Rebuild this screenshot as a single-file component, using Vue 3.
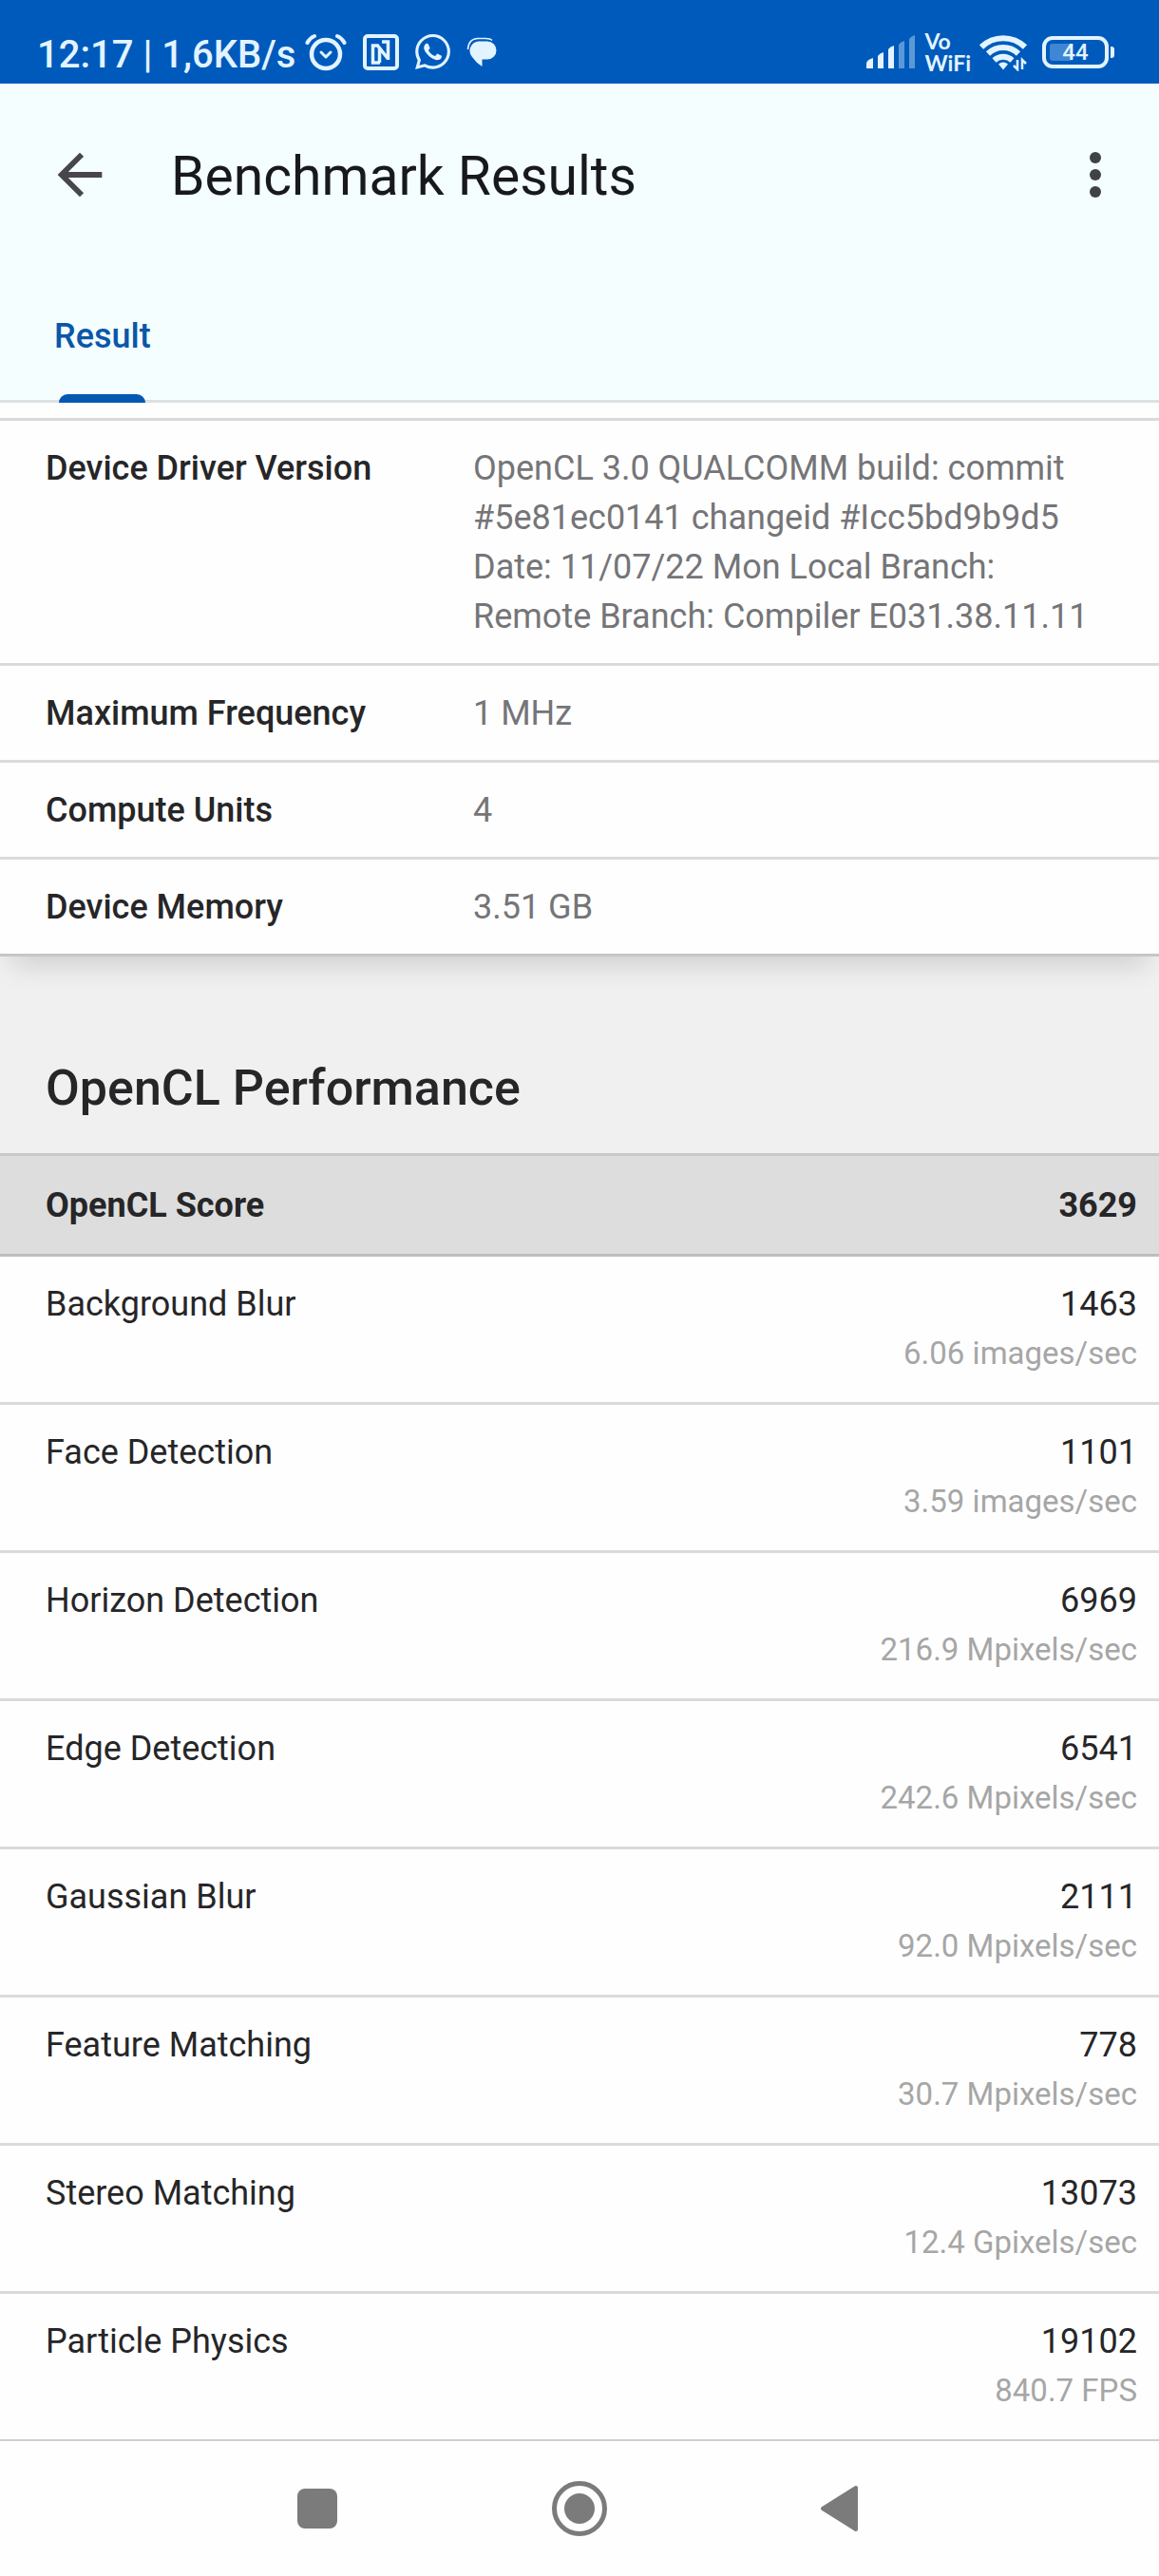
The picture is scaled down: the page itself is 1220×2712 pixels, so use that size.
<script setup>
const device = [
  { label: 'Device Driver Version', value: 'OpenCL 3.0 QUALCOMM build: commit #5e81ec0141 changeid #Icc5bd9b9d5 Date: 11/07/22 Mon Local Branch: Remote Branch: Compiler E031.38.11.11' },
  { label: 'Maximum Frequency', value: '1 MHz' },
  { label: 'Compute Units', value: '4' },
  { label: 'Device Memory', value: '3.51 GB' },
]

const results = [
  { name: 'Background Blur', score: 1463, rate: '6.06 images/sec' },
  { name: 'Face Detection', score: 1101, rate: '3.59 images/sec' },
  { name: 'Horizon Detection', score: 6969, rate: '216.9 Mpixels/sec' },
  { name: 'Edge Detection', score: 6541, rate: '242.6 Mpixels/sec' },
  { name: 'Gaussian Blur', score: 2111, rate: '92.0 Mpixels/sec' },
  { name: 'Feature Matching', score: 778, rate: '30.7 Mpixels/sec' },
  { name: 'Stereo Matching', score: 13073, rate: '12.4 Gpixels/sec' },
  { name: 'Particle Physics', score: 19102, rate: '840.7 FPS' },
]
</script>

<template>
  <div class="screen">
    <div class="status">
      <span class="clock">12:17 | 1,6KB/s</span>
      <div class="notices">
        <svg width="44" height="40" viewBox="0 0 44 40" fill="none" stroke="currentColor" stroke-linecap="round">
          <circle cx="22" cy="22" r="15" stroke-width="4.5" />
          <path d="M17 20l5 5 5-5" stroke-width="3" stroke-linejoin="round" />
          <path d="M2.500 10Q5 5 10 3M41.500 10Q39 5 34 3" stroke-width="4" />
        </svg>
        <svg width="38" height="38" viewBox="0 0 38 38" fill="none" stroke="currentColor">
          <rect x="2" y="2" width="34" height="34" rx="3" stroke-width="4" />
          <path d="M18 30h-7.500V12h5l11 14M20 8h6.500v19M17.500 14v16" stroke-width="3.500" />
        </svg>
        <svg width="37" height="37" viewBox="0 0 24 24" fill="currentColor">
          <path d="M17.472 14.382c-.297-.149-1.758-.867-2.03-.967-.273-.099-.471-.148-.67.15-.197.297-.767.966-.94 1.164-.173.199-.347.223-.644.075-.297-.15-1.255-.463-2.39-1.475-.883-.788-1.48-1.761-1.653-2.059-.173-.297-.018-.458.13-.606.134-.133.298-.347.446-.52.149-.174.198-.298.298-.497.099-.198.05-.371-.025-.52-.075-.149-.669-1.612-.916-2.207-.242-.579-.487-.5-.669-.51-.173-.008-.371-.01-.57-.01-.198 0-.52.074-.792.372-.272.297-1.04 1.016-1.04 2.479 0 1.462 1.065 2.875 1.213 3.074.149.198 2.096 3.2 5.077 4.487.709.306 1.262.489 1.694.625.712.227 1.36.195 1.871.118.571-.085 1.758-.719 2.006-1.413.248-.694.248-1.289.173-1.413-.074-.124-.272-.198-.57-.347m-5.421 7.403h-.004a9.87 9.87 0 01-5.031-1.378l-.361-.214-3.741.982.998-3.648-.235-.374a9.86 9.86 0 01-1.51-5.26c.001-5.45 4.436-9.884 9.888-9.884 2.64 0 5.122 1.03 6.988 2.898a9.825 9.825 0 012.893 6.994c-.003 5.45-4.437 9.884-9.885 9.884m8.413-18.297A11.815 11.815 0 0012.05 0C5.495 0 .16 5.335.157 11.892c0 2.096.547 4.142 1.588 5.945L.057 24l6.305-1.654a11.882 11.882 0 005.683 1.448h.005c6.554 0 11.89-5.335 11.893-11.893a11.821 11.821 0 00-3.48-8.413z" />
        </svg>
        <svg width="33" height="32" viewBox="0 0 33 32" fill="currentColor">
          <path d="M13 4.500h9a9.500 9.500 0 0 1 0 19h-5.500v7.500Q10 27 6 21a10 10 0 0 1 7-16.500z" />
          <path d="M1.500 13Q2 2 12 1.500h8Q25 1.500 27 3.500" fill="none" stroke="currentColor" stroke-width="1.500" />
        </svg>
      </div>
      <div class="radios">
        <svg width="52" height="36" viewBox="0 0 52 36" fill="currentColor">
          <path d="M0 35v-5q0-4 7-6v11zM12 35V22q2-3 6-4v17zM23 35V15q2-3 6-4v24z" />
          <path d="M34 35V10q2-3 6-4v29zM45 35V4q2-3 6-4v35z" opacity=".4" />
        </svg>
        <div class="vowifi"><span>Vo</span><span>WiFi</span></div>
        <svg width="51" height="40" viewBox="0 0 51 40" fill="none" stroke="currentColor">
          <path d="M2 14.500a33 33 0 0 1 46 0" stroke-width="6" />
          <path d="M9 21.500a23 23 0 0 1 32 0" stroke-width="6" />
          <path d="M15.500 28.500a14 14 0 0 1 19 0" stroke-width="6" />
          <path d="M20 32.500q5-4 10 0l-5 6z" fill="currentColor" stroke="none" />
          <path d="M40 28v10l-4-4M45 38V28l4 4" stroke-width="2.500" />
        </svg>
        <div class="battery"><span class="level">44</span></div>
      </div>
    </div>

    <header class="appbar">
      <div class="titlebar">
        <button class="icon-btn" type="button" aria-label="Back">
          <svg width="70" height="70" viewBox="0 0 24 24" fill="#47464c"><path d="M20 11H7.830l5.590-5.590L12 4l-8 8 8 8 1.410-1.410L7.830 13H20z" /></svg>
        </button>
        <h1>Benchmark Results</h1>
        <button class="icon-btn" type="button" aria-label="More options">
          <svg width="70" height="70" viewBox="0 0 70 70" fill="#3f4246"><circle cx="35" cy="17" r="6" /><circle cx="35" cy="35" r="6" /><circle cx="35" cy="53" r="6" /></svg>
        </button>
      </div>
      <nav class="tabs"><a class="tab" href="#result">Result</a></nav>
    </header>

    <main id="result">
      <section class="device">
        <table>
          <tbody>
            <tr v-for="row in device" :key="row.label">
              <th scope="row">{{ row.label }}</th>
              <td>{{ row.value }}</td>
            </tr>
          </tbody>
        </table>
      </section>

      <h2>OpenCL Performance</h2>

      <table class="scores">
        <thead>
          <tr>
            <th scope="col">OpenCL Score</th>
            <th scope="col" class="num">3629</th>
          </tr>
        </thead>
        <tbody>
          <tr v-for="r in results" :key="r.name">
            <td>{{ r.name }}</td>
            <td class="num">{{ r.score }}<span class="rate">{{ r.rate }}</span></td>
          </tr>
        </tbody>
      </table>
    </main>

    <nav class="sysnav">
      <button type="button" aria-label="Recent apps">
        <svg width="60" height="60" viewBox="0 0 60 60" fill="#7b7b7b"><rect x="9" y="9" width="42" height="42" rx="8" /></svg>
      </button>
      <button type="button" aria-label="Home">
        <svg width="60" height="60" viewBox="0 0 60 60" fill="#7b7b7b"><circle cx="30" cy="30" r="26.500" fill="none" stroke="#7b7b7b" stroke-width="5" /><circle cx="30" cy="30" r="16" /></svg>
      </button>
      <button type="button" aria-label="Back">
        <svg width="60" height="60" viewBox="0 0 60 60" fill="#7b7b7b" stroke="#7b7b7b" stroke-width="4" stroke-linejoin="round"><path d="M10 30L45 8V52z" /></svg>
      </button>
    </nav>
  </div>
</template>

<style>
body {
  background: #fff;
}
</style>

<style scoped>
.screen {
  display: flex;
  flex-direction: column;
  min-height: 100vh;
  background: #fefefe;
  color: #262628;
  font-family: Roboto, "Noto Sans", sans-serif;
  font-size: 36px;
  line-height: 52px;
}
button {
  display: flex;
  align-items: center;
  justify-content: center;
  padding: 0;
  border: 0;
  background: none;
}
svg {
  display: block;
  flex: none;
}

.status {
  box-sizing: border-box;
  display: flex;
  align-items: center;
  height: 88px;
  padding: 21px 46px 0 39px;
  background: #005abc;
  color: #e2f4ff;
}
.clock {
  padding-top: 7px;
  font-size: 40px;
  font-weight: 500;
  line-height: 46px;
  white-space: nowrap;
}
.notices {
  display: flex;
  align-items: center;
  gap: 17px;
  margin-left: 10px;
}
.radios {
  display: flex;
  align-items: center;
  gap: 9px;
  margin-left: auto;
}
.vowifi {
  font-family: Lato, Roboto, sans-serif;
  font-size: 23px;
  font-weight: 700;
  line-height: 23px;
}
.vowifi span {
  display: block;
}
.battery {
  position: relative;
  box-sizing: border-box;
  display: flex;
  align-items: center;
  justify-content: center;
  width: 70px;
  height: 34px;
  margin: 0 7px 0 6px;
  border: 4px solid currentColor;
  border-radius: 11px;
}
.battery::before {
  content: "";
  position: absolute;
  inset: 4px 34px 4px 4px;
  border-radius: 3px;
  background: #3f86d4;
}
.battery::after {
  content: "";
  position: absolute;
  top: 7px;
  right: -10px;
  width: 4px;
  height: 12px;
  border-radius: 0 3px 3px 0;
  background: currentColor;
}
.level {
  position: relative;
  font-size: 24px;
  font-weight: 500;
  line-height: 26px;
}

.appbar {
  display: flex;
  flex-direction: column;
  background: #f5feff;
  border-bottom: 3px solid #dce1e4;
}
.titlebar {
  display: flex;
  align-items: center;
  height: 192px;
  padding: 0 32px 0 49px;
}
.icon-btn {
  width: 70px;
  height: 70px;
}
h1 {
  flex: 1;
  margin: 0;
  padding: 4px 0 0 61px;
  color: #17191d;
  font-size: 57px;
  font-weight: 400;
  line-height: 68px;
}
.tabs {
  display: flex;
  height: 141px;
  padding-left: 57px;
}
.tab {
  position: relative;
  padding-top: 48px;
  color: #0b57a8;
  font-weight: 500;
  text-decoration: none;
}
.tab::after {
  content: "";
  position: absolute;
  right: 6px;
  bottom: -3px;
  left: 5px;
  height: 9px;
  border-radius: 9px 9px 0 0;
  background: #0558b2;
}

main {
  flex: 1;
  background: #f0f0f0;
}
table {
  width: 100%;
  border-collapse: separate;
  border-spacing: 0;
  table-layout: fixed;
}
th,
td {
  padding: 24px 48px 23px;
  text-align: left;
  vertical-align: top;
}
.device {
  padding-top: 16px;
  background: #fefefe;
  border-bottom: 3px solid #c6c6c6;
  box-shadow: 0 20px 28px -12px rgba(0, 0, 0, 0.15);
}
.device th,
.device td {
  border-top: 3px solid #dadada;
}
.device th {
  width: 402px;
  font-weight: 500;
}
.device td {
  padding-left: 0;
  color: #757578;
}

h2 {
  margin: 0;
  padding: 105px 48px 34px;
  font-size: 52px;
  font-weight: 500;
  line-height: 68px;
}

.scores {
  background: #fefefe;
}
.scores thead th {
  padding-top: 26px;
  padding-bottom: 25px;
  background: #ddd;
  border-top: 3px solid #c8c8c8;
  border-bottom: 3px solid #bebebe;
  font-weight: 700;
}
.scores td {
  padding-bottom: 25px;
  border-bottom: 3px solid #dadada;
}
.scores tr:last-child td {
  border-bottom: 0;
}
.scores .num {
  padding-right: 23px;
  text-align: right;
}
.rate {
  display: block;
  color: #a6a6a6;
  font-size: 33px;
}

.sysnav {
  display: flex;
  justify-content: center;
  height: 142px;
  background: #fefefe;
  border-top: 2px solid #cfcfcf;
}
.sysnav button {
  flex: 0 1 276px;
}
</style>
